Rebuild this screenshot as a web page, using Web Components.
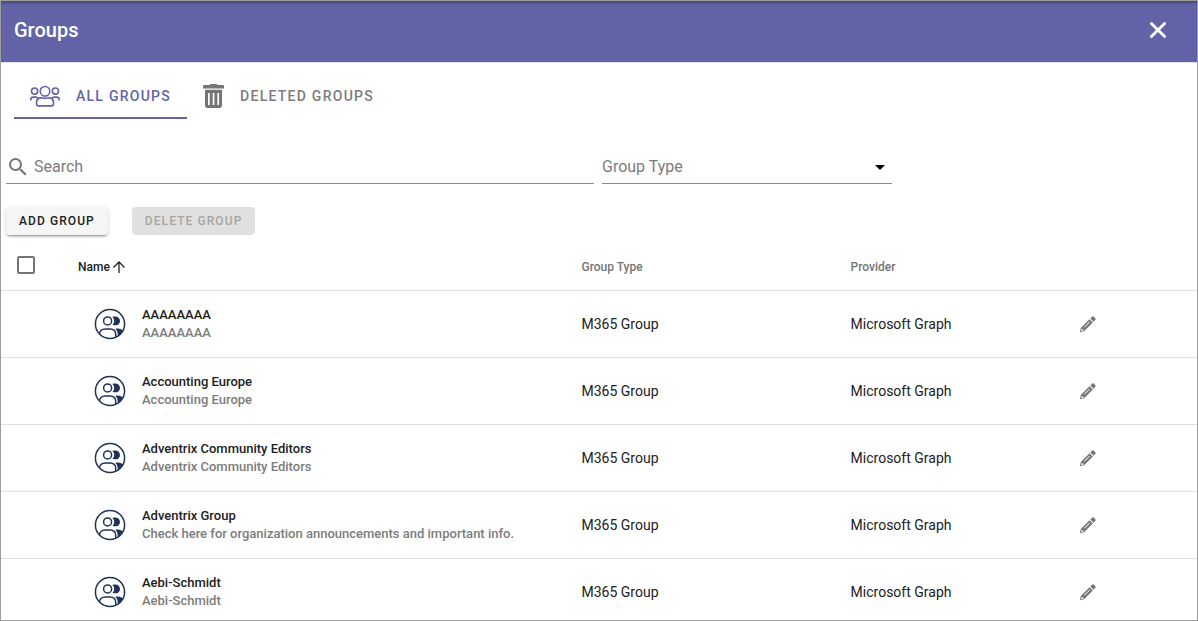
<!DOCTYPE html>
<html lang="en">
<head>
<meta charset="utf-8">
<meta name="viewport" content="width=device-width, initial-scale=1">
<title>Groups</title>
<style>
  html { height: 100%; }
  body { margin: 0; height: 100%; font-family: Roboto, "Liberation Sans", sans-serif; color: #212121; background: #fff; }
</style>
</head>
<body>
<groups-page></groups-page>

<script>
const define = (name, html, setup) => {
  const template = document.createElement('template');
  template.innerHTML = html;
  customElements.define(name, class extends HTMLElement {
    constructor() {
      super();
      this.attachShadow({ mode: 'open' }).append(template.content.cloneNode(true));
    }
    connectedCallback() { if (setup) setup(this, this.shadowRoot); }
  });
};

const icons = {
  close: '<svg viewBox="0 0 24 24"><path fill="none" stroke="currentColor" stroke-width="2.8" stroke-linecap="round" d="M5.4 5.4 18.6 18.6M18.6 5.4 5.4 18.6"/></svg>',
  users: '<svg viewBox="0 0 32 22" fill="none" stroke="currentColor" stroke-width="1.7"><circle cx="16" cy="6" r="5.1"/><circle cx="4.900" cy="5.700" r="3.300"/><circle cx="27.100" cy="5.700" r="3.300"/><path stroke-linecap="round" d="M.9 15.200v-.4c0-1.600 1.200-2.600 2.700-2.600h2.500c.7 0 1.200.1 1.700.5M31.100 15.200v-.4c0-1.600-1.200-2.600-2.700-2.600h-2.500c-.7 0-1.200.1-1.700.5"/><path d="M7 19.600v-1.700c0-3 2-4.900 4.800-4.900 1.400 0 2.200.5 4.200.5s2.800-.5 4.200-.5c2.800 0 4.800 1.900 4.800 4.900v1.700c0 1.200-.8 1.900-2 1.900H9c-1.200 0-2-.7-2-1.900z"/></svg>',
  trash: '<svg viewBox="0 0 21 24" fill="currentColor"><path fill-rule="evenodd" d="M0 2.200C0 1.500.5 1 1.200 1H6.400L7 .4C7.300.1 7.600 0 8 0h5c.4 0 .7.1 1 .4l.6.600h5.200c.7 0 1.200.5 1.200 1.200v2.300H0zM2 5.800h17v15.800c0 1.400-1 2.400-2.400 2.400H4.400C3 24 2 23 2 21.600zM5 9v12h1.700V9zm4.700 0v12h1.700V9zm4.700 0v12h1.700V9z"/></svg>',
  search: '<svg viewBox="0 0 24 24"><path fill="currentColor" d="M9.500 3A6.500 6.500 0 0 1 16 9.500c0 1.610-.59 3.090-1.560 4.230l.27.270h.79l5 5-1.500 1.500-5-5v-.79l-.27-.27A6.516 6.516 0 0 1 9.500 16a6.500 6.500 0 0 1 0-13m0 2C7 5 5 7 5 9.500S7 14 9.500 14 14 12 14 9.500 12 5 9.500 5"/></svg>',
  arrow: '<svg viewBox="0 0 14 14"><path fill="none" stroke="currentColor" stroke-width="1.300" d="M7 13V2M1.500 7.500 7 2l5.500 5.500"/></svg>',
  pencil: '<svg viewBox="0 0 18 18"><g fill="currentColor"><path d="M12 2.600 13.900.7c.5-.5 1.300-.5 1.800 0l1.600 1.600c.5.5.5 1.300 0 1.800L15.400 6z"/><path fill-rule="evenodd" d="m11.200 3.400 3.400 3.400-9.200 9.300-4.400 1.100.9-4.600zM2.900 13.600l-.4 2 .6.500 1.700-.5v-1.100H3.600v-1.100zM5.300 11.700l.6.600 5.700-5.700-.6-.6z"/></g></svg>',
  people: '<svg viewBox="0 0 32 32"><defs><clipPath id="c"><circle cx="16" cy="16" r="14.600"/></clipPath></defs><g clip-path="url(#c)"><path fill="currentColor" d="M18.300 9c4.500-1.500 7.700.8 7.700 3.900 0 3.300-3.200 5.600-7.500 3.900 2.300-2 2.300-5.700-.2-7.800zM21.300 20.800c4.200-.9 7.700 1 8.700 3.400L23.700 31v-4.600c0-2.400-.8-4.100-2.400-5.600z"/><path fill="none" stroke="currentColor" stroke-width="1.500" d="M5.500 28v-1.600c0-3.400 2.500-5.400 5.700-5.400h4.800c3.500 0 5.700 2.100 5.700 5.400V31"/></g><g fill="none" stroke="currentColor" stroke-width="1.500"><circle cx="13.600" cy="12.900" r="4"/><circle cx="16" cy="16" r="14.600"/></g></svg>'
};

define('app-icon', `
  <style>
    :host { display: block; flex: none; width: 24px; height: 24px; }
    svg { display: block; width: 100%; height: 100%; }
  </style>`,
  (host, root) => {
    if (!root.querySelector('svg')) root.lastElementChild.insertAdjacentHTML('afterend', icons[host.getAttribute('name')]);
  });

define('panel-header', `
  <style>
    :host { display: flex; flex: none; align-items: center; justify-content: space-between; box-sizing: border-box; height: 62px; padding: 0 27px 4px 13px;
      color: #fff; background: #6264a7; box-shadow: inset 0 3px 3px -1px rgba(0,0,0,.3); border-bottom: 1px solid #e0e0e0; }
    h1 { margin: 0; font-size: 20px; line-height: 28px; font-weight: 500; }
    button { padding: 0; border: 0; background: none; color: inherit; }
  </style>
  <h1><slot></slot></h1>
  <button type="button" aria-label="Close"><app-icon name="close"></app-icon></button>`);

define('nav-tab', `
  <style>
    :host { display: block; }
    button { display: flex; align-items: center; gap: 16px; box-sizing: border-box; height: 48px; padding: 4px 16px 0;
      border: 0; border-bottom: 2px solid transparent; background: none; color: #7c7c7c;
      font: 500 14px/20px Roboto, sans-serif; letter-spacing: .09em; text-transform: uppercase; }
    :host([selected]) button { color: #6264a7; border-color: #6264a7; }
    app-icon[name=users] { width: 30px; }
    app-icon[name=trash] { width: 21px; color: #757575; }
  </style>
  <button type="button" role="tab"><app-icon></app-icon><span><slot></slot></span></button>`,
  (host, root) => {
    const icon = document.createElement('app-icon');
    icon.setAttribute('name', host.getAttribute('icon'));
    root.querySelector('app-icon').replaceWith(icon);
    root.querySelector('button').setAttribute('aria-selected', host.hasAttribute('selected'));
  });

define('search-field', `
  <style>
    :host { display: flex; align-items: center; box-sizing: border-box; height: 35px; padding-top: 2px; border-bottom: 1px solid #8c8c8c; color: #757575; }
    app-icon { margin-right: 4px; }
    input { flex: 1; min-width: 0; padding: 0; border: 0; outline: 0; background: none; font: 400 16px/20px Roboto, sans-serif; color: #212121; }
    input::placeholder { color: #7c7c7c; opacity: 1; }
  </style>
  <app-icon name="search"></app-icon><input type="text" placeholder="Search" aria-label="Search">`);

define('select-field', `
  <style>
    :host { display: grid; align-items: center; box-sizing: border-box; height: 35px; padding-top: 2px; border-bottom: 1px solid #8c8c8c; }
    select, i { grid-area: 1 / 1; }
    select { appearance: none; width: 100%; height: 32px; padding: 0; border: 0; background: none; font: 400 16px/20px Roboto, sans-serif; color: #7c7c7c; }
    i { justify-self: end; margin-right: 7px; border: 5px solid transparent; border-top-color: #000; border-bottom: 0; pointer-events: none; }
  </style>
  <select aria-label="Group Type"><option>Group Type</option></select><i></i>`);

define('action-button', `
  <style>
    :host { display: block; }
    button { height: 28px; padding: 0 13px; border: 0; border-radius: 4px; background: #f5f5f5; color: #212121;
      font: 500 12px/20px Roboto, sans-serif; letter-spacing: .09em; text-transform: uppercase;
      box-shadow: 0 3px 1px -2px rgba(0,0,0,.2), 0 2px 2px rgba(0,0,0,.14), 0 1px 5px rgba(0,0,0,.12); }
    button:disabled { background: #e0e0e0; color: #a6a6a6; box-shadow: none; }
  </style>
  <button type="button"><slot></slot></button>`,
  (host, root) => { root.querySelector('button').disabled = host.hasAttribute('disabled'); });

define('group-label', `
  <style>
    :host { display: flex; align-items: center; gap: 16px; padding-left: 16px; font-size: 13px; line-height: 18px; font-weight: 500; }
    app-icon { width: 32px; height: 32px; color: #1f3358; }
    ::slotted(*) { display: block; }
    ::slotted([slot=description]) { color: #7c7c7c; }
  </style>
  <app-icon name="people"></app-icon>
  <div><slot name="title"></slot><slot name="description"></slot></div>`);

const groups = [
  ['AAAAAAAA', 'AAAAAAAA'],
  ['Accounting Europe', 'Accounting Europe'],
  ['Adventrix Community Editors', 'Adventrix Community Editors'],
  ['Adventrix Group', 'Check here for organization announcements and important info.'],
  ['Aebi-Schmidt', 'Aebi-Schmidt']
];

define('groups-table', `
  <style>
    :host { display: block; }
    table { width: 100%; border-collapse: separate; border-spacing: 0; table-layout: fixed; }
    th, td { box-sizing: border-box; padding: 0 16px; text-align: left; border-bottom: 1px solid #e0e0e0; }
    th { height: 49px; padding-top: 2px; font-size: 12px; line-height: 18px; font-weight: 500; color: #757575; }
    td { height: 67px; font-size: 14px; line-height: 20px; }
    .pick { width: 5.1%; } .name { width: 42.1%; } .type { width: 22.5%; } .provider { width: 19.1%; }
    .sort { display: flex; align-items: center; gap: 2px; color: #212121; }
    .sort app-icon { width: 14px; height: 14px; }
    input { appearance: none; display: block; box-sizing: border-box; width: 18px; height: 18px; margin: 0 0 4px; border: 2px solid #757575; border-radius: 2px; background: #fff; }
    button { display: block; padding: 0; border: 0; background: none; color: #757575; }
    button app-icon { width: 17px; height: 17px; }
  </style>
  <table>
    <thead><tr>
      <th class="pick"><input type="checkbox" aria-label="Select all"></th>
      <th class="name" aria-sort="ascending"><span class="sort">Name<app-icon name="arrow"></app-icon></span></th>
      <th class="type">Group Type</th>
      <th class="provider">Provider</th>
      <th></th>
    </tr></thead>
    <tbody></tbody>
  </table>`,
  (host, root) => {
    root.querySelector('tbody').innerHTML = groups.map(([title, description]) => `
      <tr><td></td>
      <td><group-label><span slot="title">${title}</span><span slot="description">${description}</span></group-label></td>
      <td>M365 Group</td><td>Microsoft Graph</td>
      <td><button type="button" aria-label="Edit ${title}"><app-icon name="pencil"></app-icon></button></td></tr>`).join('');
  });

define('groups-page', `
  <style>
    :host { display: flex; flex-direction: column; box-sizing: border-box; height: 100%; border: 1px solid #9e9e9e; background: #fff; }
    main { flex: 1; min-height: 0; overflow-y: auto; scrollbar-width: none; }
    nav { display: flex; padding: 8px 13px 0; }
    .filters { display: grid; grid-template-columns: 588fr 290fr 292fr; gap: 8px; padding: 30px 5px 0; }
    .filters::after { content: ""; }
    .actions { display: flex; gap: 24px; padding: 23px 5px 7px; }
  </style>
  <panel-header>Groups</panel-header>
  <main>
    <nav role="tablist">
      <nav-tab icon="users" selected>All groups</nav-tab>
      <nav-tab icon="trash">Deleted groups</nav-tab>
    </nav>
    <div class="filters"><search-field></search-field><select-field></select-field></div>
    <div class="actions">
      <action-button>Add group</action-button>
      <action-button disabled>Delete group</action-button>
    </div>
    <groups-table></groups-table>
  </main>`);
</script>
</body>
</html>
